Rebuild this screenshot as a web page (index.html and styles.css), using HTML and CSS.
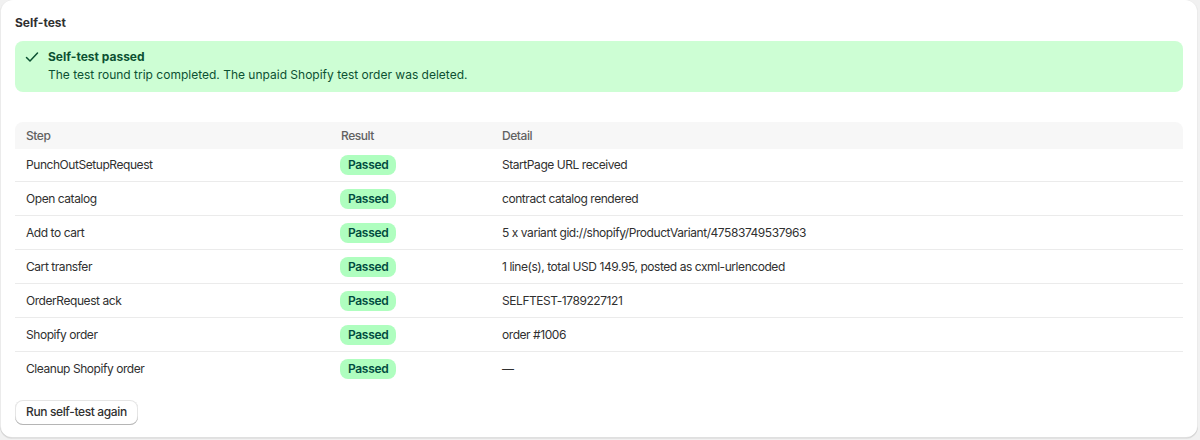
FILE: index.html
```html
<!DOCTYPE html>
<html lang="en">
<head>
  <meta charset="UTF-8" />
  <meta name="viewport" content="width=device-width, initial-scale=1.0"/>
  <title>Self-test</title>
  <link rel="stylesheet" href="styles.css">
</head>
<body>
  <div class="card">
    <h2 class="card-title">Self-test</h2>

    <div class="banner">
      <svg class="banner-icon" viewBox="0 0 20 20" width="20" height="20">
        <path d="M4.5 10.5l3.5 3.5 7.5-8" fill="none" stroke="currentColor" stroke-width="1.5" stroke-linecap="round" stroke-linejoin="round"/>
      </svg>
      <div class="banner-body">
        <div class="banner-title">Self-test passed</div>
        <div>The test round trip completed. The unpaid Shopify test order was deleted.</div>
      </div>
    </div>

    <table class="steps">
      <thead>
        <tr>
          <th class="col-step">Step</th>
          <th class="col-result">Result</th>
          <th>Detail</th>
        </tr>
      </thead>
      <tbody>
        <tr>
          <td>PunchOutSetupRequest</td>
          <td><span class="badge">Passed</span></td>
          <td>StartPage URL received</td>
        </tr>
        <tr>
          <td>Open catalog</td>
          <td><span class="badge">Passed</span></td>
          <td>contract catalog rendered</td>
        </tr>
        <tr>
          <td>Add to cart</td>
          <td><span class="badge">Passed</span></td>
          <td>5 x variant gid://shopify/ProductVariant/47583749537963</td>
        </tr>
        <tr>
          <td>Cart transfer</td>
          <td><span class="badge">Passed</span></td>
          <td>1 line(s), total USD 149.95, posted as cxml-urlencoded</td>
        </tr>
        <tr>
          <td>OrderRequest ack</td>
          <td><span class="badge">Passed</span></td>
          <td>SELFTEST-1789227121</td>
        </tr>
        <tr>
          <td>Shopify order</td>
          <td><span class="badge">Passed</span></td>
          <td>order #1006</td>
        </tr>
        <tr>
          <td>Cleanup Shopify order</td>
          <td><span class="badge">Passed</span></td>
          <td>—</td>
        </tr>
      </tbody>
    </table>

    <button class="btn" type="button">Run self-test again</button>
  </div>
</body>
</html>
```

FILE: styles.css
```css
body {
  margin: 0;
  padding: 0 2px 2px 0;
  background-color: #f1f1f1;
  font-family: Inter, "Noto Sans", sans-serif;
  font-size: 12px;
  line-height: 20px;
  color: #303030;
}
.card {
  background: #fff;
  border-radius: 12px;
  padding: 13px 15px 13px 15px;
  height: 438px;
  box-sizing: border-box;
  box-shadow: 0 1px 0 0 rgba(26, 26, 26, 0.07),
    inset 0 -1px 0 0 rgba(0, 0, 0, 0.12),
    inset -1px 0 0 0 rgba(0, 0, 0, 0.08),
    inset 1px 0 0 0 rgba(0, 0, 0, 0.08);
}
.card-title {
  margin: 0 0 8px;
  font-size: 12px;
  font-weight: 650;
  line-height: 20px;
}
.banner {
  display: flex;
  gap: 6px;
  background: #cdfed4;
  color: #0c5132;
  border-radius: 8px;
  padding: 7px 12px 8px 7px;
  line-height: 18px;
}
.banner-icon {
  flex: none;
  margin-top: -1px;
}
.banner-title {
  font-weight: 650;
}
.steps {
  width: 100%;
  margin-top: 30px;
  border-collapse: separate;
  border-spacing: 0;
  letter-spacing: -0.44px;
}
.steps th {
  background: #f7f7f7;
  color: #616161;
  font-weight: 450;
  text-align: left;
  padding: 0 11px;
  height: 27px;
}
.steps th:first-child {
  border-radius: 8px 0 0 0;
}
.steps th:last-child {
  border-radius: 0 8px 0 0;
}
.col-step {
  width: 293px;
}
.col-result {
  width: 139px;
}
.steps td {
  padding: 0 11px;
  height: 33px;
}
.steps tbody tr:first-child td {
  height: 32px;
}
.steps tbody tr + tr td {
  border-top: 1px solid #ebebeb;
}
.badge {
  display: inline-block;
  background: #affebf;
  color: #014b40;
  font-size: 12px;
  font-weight: 600;
  line-height: 16px;
  letter-spacing: -0.33px;
  padding: 2px 8px;
  border-radius: 8px;
  margin-left: -1px;
}
.btn {
  margin-top: 15px;
  font-family: inherit;
  font-size: 12px;
  font-weight: 550;
  line-height: 16px;
  letter-spacing: -0.37px;
  color: #303030;
  background: #fff;
  border: none;
  border-radius: 8px;
  padding: 4px 11px 5px;
  cursor: pointer;
  box-shadow: inset 0 -1px 0 0 #b5b5b5,
    inset 0 0 0 1px rgba(0, 0, 0, 0.1),
    inset 0 0.5px 0 1.5px #fff;
}
```
